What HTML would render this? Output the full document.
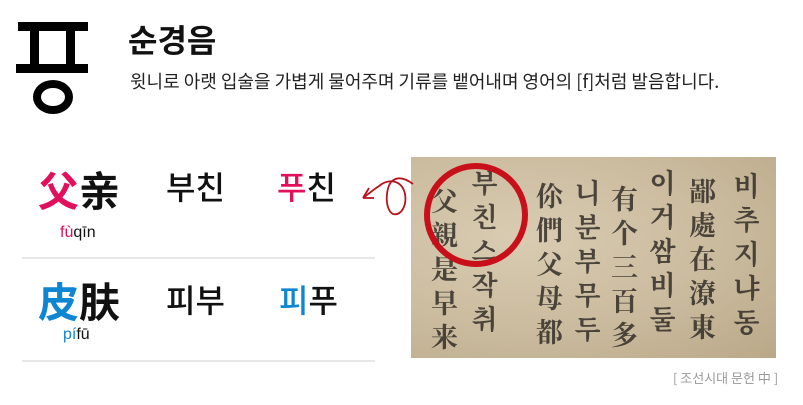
<!DOCTYPE html>
<html><head><meta charset="utf-8"><style>
body{margin:0;width:803px;height:405px;background:#fff;position:relative;overflow:hidden;font-family:"Liberation Sans","Noto Sans CJK KR",sans-serif;color:#111}
.a{position:absolute;white-space:nowrap}
.bk{position:absolute;background:#000}
.zh{font-family:"Noto Sans CJK SC",sans-serif;font-weight:700;font-size:41px;line-height:1}
.ko{font-family:"Noto Sans CJK KR",sans-serif;font-weight:500;font-size:32px;line-height:1}
.py{font-family:"Liberation Sans","DejaVu Sans",sans-serif;font-size:16px}
.pk{color:#e2105c}.bl{color:#0f86d2}
.ln{position:absolute;left:22px;width:353px;height:2px;background:#e8e8e8}
.doc{position:absolute;left:411px;top:157px;width:365px;height:201px;overflow:hidden;
background:radial-gradient(ellipse at 30% 40%,#d9ccb2,#c9b99c 60%,#b9a888);}
.col{position:absolute;writing-mode:vertical-rl;white-space:nowrap;font-family:"Noto Serif CJK SC","Noto Sans CJK KR",serif;font-weight:700;font-size:27px;color:#2a2520;opacity:.8;line-height:1;letter-spacing:7px}
</style></head><body>
<div class="bk" style="left:18px;top:22px;width:70px;height:9px"></div>
<div class="bk" style="left:30px;top:28px;width:9px;height:40px"></div>
<div class="bk" style="left:66px;top:28px;width:9px;height:40px"></div>
<div class="bk" style="left:16px;top:64px;width:72px;height:9px"></div>
<div style="position:absolute;left:33px;top:80px;width:24px;height:18px;border:8px solid #000;border-radius:50%"></div>

<div class="a" style="left:128px;top:20px;font-family:'Noto Sans CJK KR',sans-serif;font-weight:700;font-size:32px;line-height:1.2">순경음</div>
<div class="a" style="left:130px;top:71px;font-family:'Noto Sans CJK KR',sans-serif;font-size:18px;color:#222;line-height:1.2">윗니로 아랫 입술을 가볍게 물어주며 기류를 뱉어내며 영어의 [f]처럼 발음합니다.</div>

<div class="a zh" style="left:38px;top:168px"><span class="pk">父</span>亲</div>
<div class="a py" style="left:60px;top:224px"><span class="pk">fù</span>qīn</div>
<div class="a ko" style="left:166px;top:170px">부친</div>
<div class="a ko" style="left:277px;top:170px"><span class="pk">푸</span>친</div>
<div class="ln" style="top:257px"></div>
<div class="a zh" style="left:38px;top:279px"><span class="bl">皮</span>肤</div>
<div class="a py" style="left:63px;top:326px"><span class="bl">pí</span>fū</div>
<div class="a ko" style="left:166px;top:283px">피부</div>
<div class="a ko" style="left:279px;top:283px"><span class="bl">피</span>푸</div>
<div class="ln" style="top:360px"></div>

<div class="doc">
<div class="col" style="left:20px;top:30px">父親是早来</div>
<div class="col" style="left:60px;top:12px">부친스작취</div>
<div class="col" style="left:125px;top:25px">伱們父母都</div>
<div class="col" style="left:163px;top:22px">니분부무두</div>
<div class="col" style="left:200px;top:28px">有个三百多</div>
<div class="col" style="left:238px;top:12px">이거쌈비둘</div>
<div class="col" style="left:278px;top:20px">鄙處在潦東</div>
<div class="col" style="left:322px;top:15px">비추지냐동</div>
<div style="position:absolute;left:13px;top:6px;width:92px;height:92px;border:6px solid #c8101a;border-radius:50%"></div>
</div>
<svg style="position:absolute;left:355px;top:170px" width="90" height="60">
<path d="M58 14 C50 8 42 6 36 12 C30 20 30 40 38 44 C46 46 52 36 50 24 C47 10 34 8 24 16 C18 20 12 25 8 28" fill="none" stroke="#b5141c" stroke-width="1.8"/>
<path d="M8 28 L14 18 M8 28 L19 28" fill="none" stroke="#b5141c" stroke-width="1.8"/>
</svg>
<div class="a" style="left:673px;top:368px;font-size:13px;color:#999;font-family:'Noto Sans CJK KR',sans-serif">[ 조선시대 문헌 中 ]</div>
</body></html>
